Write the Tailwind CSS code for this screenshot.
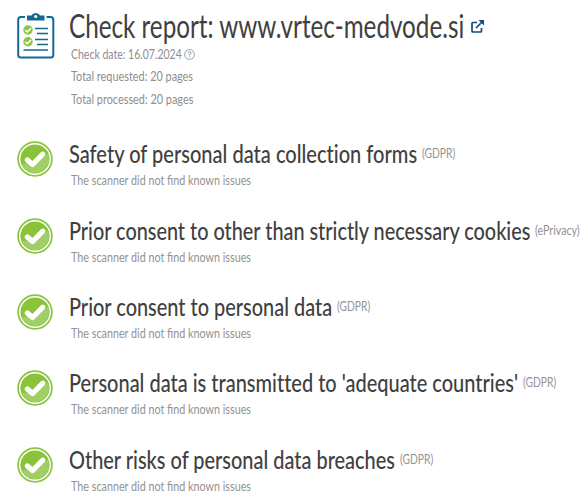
<!DOCTYPE html>
<html lang="en">
<head>
<meta charset="utf-8">
<title>Check report</title>
<script src="https://cdn.jsdelivr.net/npm/@tailwindcss/browser@4"></script>
</head>
<body class="bg-white w-[588px] h-[504px] overflow-hidden font-['Lato','Open_Sans',sans-serif] text-[#404040] whitespace-nowrap">
<svg class="absolute w-0 h-0">
  <defs>
    <symbol id="ok" viewBox="0 0 36 36">
      <circle cx="18" cy="18" r="16.900" fill="#fff" stroke="#8cc540" stroke-width="1.700"/>
      <circle cx="18" cy="18" r="14.600" fill="#8ac33a"/>
      <path d="M4.500 23.500Q20 21 31.500 12.500A14.600 14.600 0 0 1 4.500 23.500Z" fill="#a1cf66"/>
      <path d="M10.400 19 15.600 23.500 25.800 13.200" fill="none" stroke="#fff" stroke-width="5.200" stroke-linecap="round" stroke-linejoin="round"/>
    </symbol>
  </defs>
</svg>
<header class="flex h-[138.200px] pl-[17px] pt-[5px]">
  <svg class="w-[38px] h-[47px] mt-[7px] mr-[14px] shrink-0" viewBox="0 0 38 47">
    <path d="M8 5H4Q1.200 5 1.200 8V43Q1.200 45.500 4 45.500H33.500Q36.300 45.500 36.300 43V8Q36.300 5 33.500 5H29.500" fill="none" stroke="#126a93" stroke-width="2"/>
    <path d="M10 3.500H14.500Q15.500 1 18.700 1T23 3.500H27.500V8.500H10Z" fill="#126a93"/>
    <circle cx="18.700" cy="4.500" r="1.600" fill="#fff"/>
    <path d="M18 16.500H31M20 21.500H31M18 27.500H31M20 32.500H31M6.500 38H31" stroke="#126a93" stroke-width="1.400"/>
    <g fill="#8cc540"><circle cx="11" cy="18" r="4.700"/><circle cx="11" cy="29.700" r="4.700"/></g>
    <path d="M8.300 18.200 10.300 20 14 16.200M8.300 29.900 10.300 31.700 14 27.900" fill="none" stroke="#fff" stroke-width="1.600"/>
  </svg>
  <div>
    <div class="flex items-center">
      <h1 class="w-[395px] text-[32px] leading-[41px] h-[40px]"><span data-fit class="inline-block origin-left">Check report: www.vrtec-medvode.si</span></h1>
      <svg class="w-[13px] h-[13px] ml-[7px] mt-[2px]" viewBox="0 0 13 13" fill="none" stroke="#15497a" stroke-width="1.700"><path d="M6 2.500H2Q1 2.500 1 3.500V11Q1 12 2 12H9.500Q10.500 12 10.500 11V8M5 8 11 2"/><path d="M7.500 0H13V5.500Z" fill="#15497a" stroke="none"/></svg>
    </div>
    <div class="pl-[2px] text-[14px] text-[#8e8e8e] leading-[22px] -mt-[2px]">
      <div class="flex items-center"><div class="w-[111px]"><span data-fit class="inline-block origin-left">Check date: 16.07.2024</span></div>
        <svg class="w-[11px] h-[11px] ml-[2px]" viewBox="0 0 11 11" fill="none" stroke="#929292"><circle cx="5.500" cy="5.500" r="4.900" stroke-width=".9"/><path d="M3.900 4.300Q4 2.900 5.500 2.900T7 4.200Q7 5 5.500 5.700V6.500M5.500 7.500V8.500"/></svg>
      </div>
      <div class="w-[122px] h-[23px]"><span data-fit class="inline-block origin-left">Total requested: 20 pages</span></div>
      <div class="w-[122px]"><span data-fit class="inline-block origin-left">Total processed: 20 pages</span></div>
    </div>
  </div>
</header>
<main id="rows" class="overflow-hidden"></main>
<template id="row">
  <section class="flex h-[76.400px] pl-[17px]">
    <svg class="w-[36px] h-[36px] mt-[3px] mr-[16px] shrink-0"><use href="#ok"/></svg>
    <div>
      <div class="flex items-start h-[31px]">
        <h2 class="text-[25px] leading-[30px] [font-variant-ligatures:none] font-medium"><span data-fit class="inline-block origin-left"></span></h2>
        <div class="ml-[5px] text-[14px] leading-[30px] text-[#929292]"><span data-fit class="inline-block origin-left"></span></div>
      </div>
      <p class="w-[180px] ml-[2px] text-[14px] leading-[22px] text-[#929292]"><span data-fit class="inline-block origin-left">The scanner did not find known issues</span></p>
    </div>
  </section>
</template>
<script>
const rows = [
  ["Safety of personal data collection forms", 348, "(GDPR)", 33],
  ["Prior consent to other than strictly necessary cookies", 461, "(ePrivacy)", 45],
  ["Prior consent to personal data", 263, "(GDPR)", 33],
  ["Personal data is transmitted to 'adequate countries'", 449, "(GDPR)", 33],
  ["Other risks of personal data breaches", 326, "(GDPR)", 33]
];
for (const [title, width, tag, tagWidth] of rows) {
  const node = document.getElementById("row").content.cloneNode(true);
  const h = node.querySelector("h2"), t = h.nextElementSibling;
  h.style.width = width + "px";
  t.style.width = tagWidth + "px";
  h.firstElementChild.textContent = title;
  t.firstElementChild.textContent = tag;
  document.getElementById("rows").append(node);
}
// Condense each label to the width of its column whenever its size changes.
const observer = new ResizeObserver(entries => {
  for (const { target } of entries) {
    target.style.transform = `scaleX(${target.parentElement.clientWidth / target.offsetWidth})`;
  }
});
document.querySelectorAll("[data-fit]").forEach(s => observer.observe(s));
</script>
</body>
</html>
